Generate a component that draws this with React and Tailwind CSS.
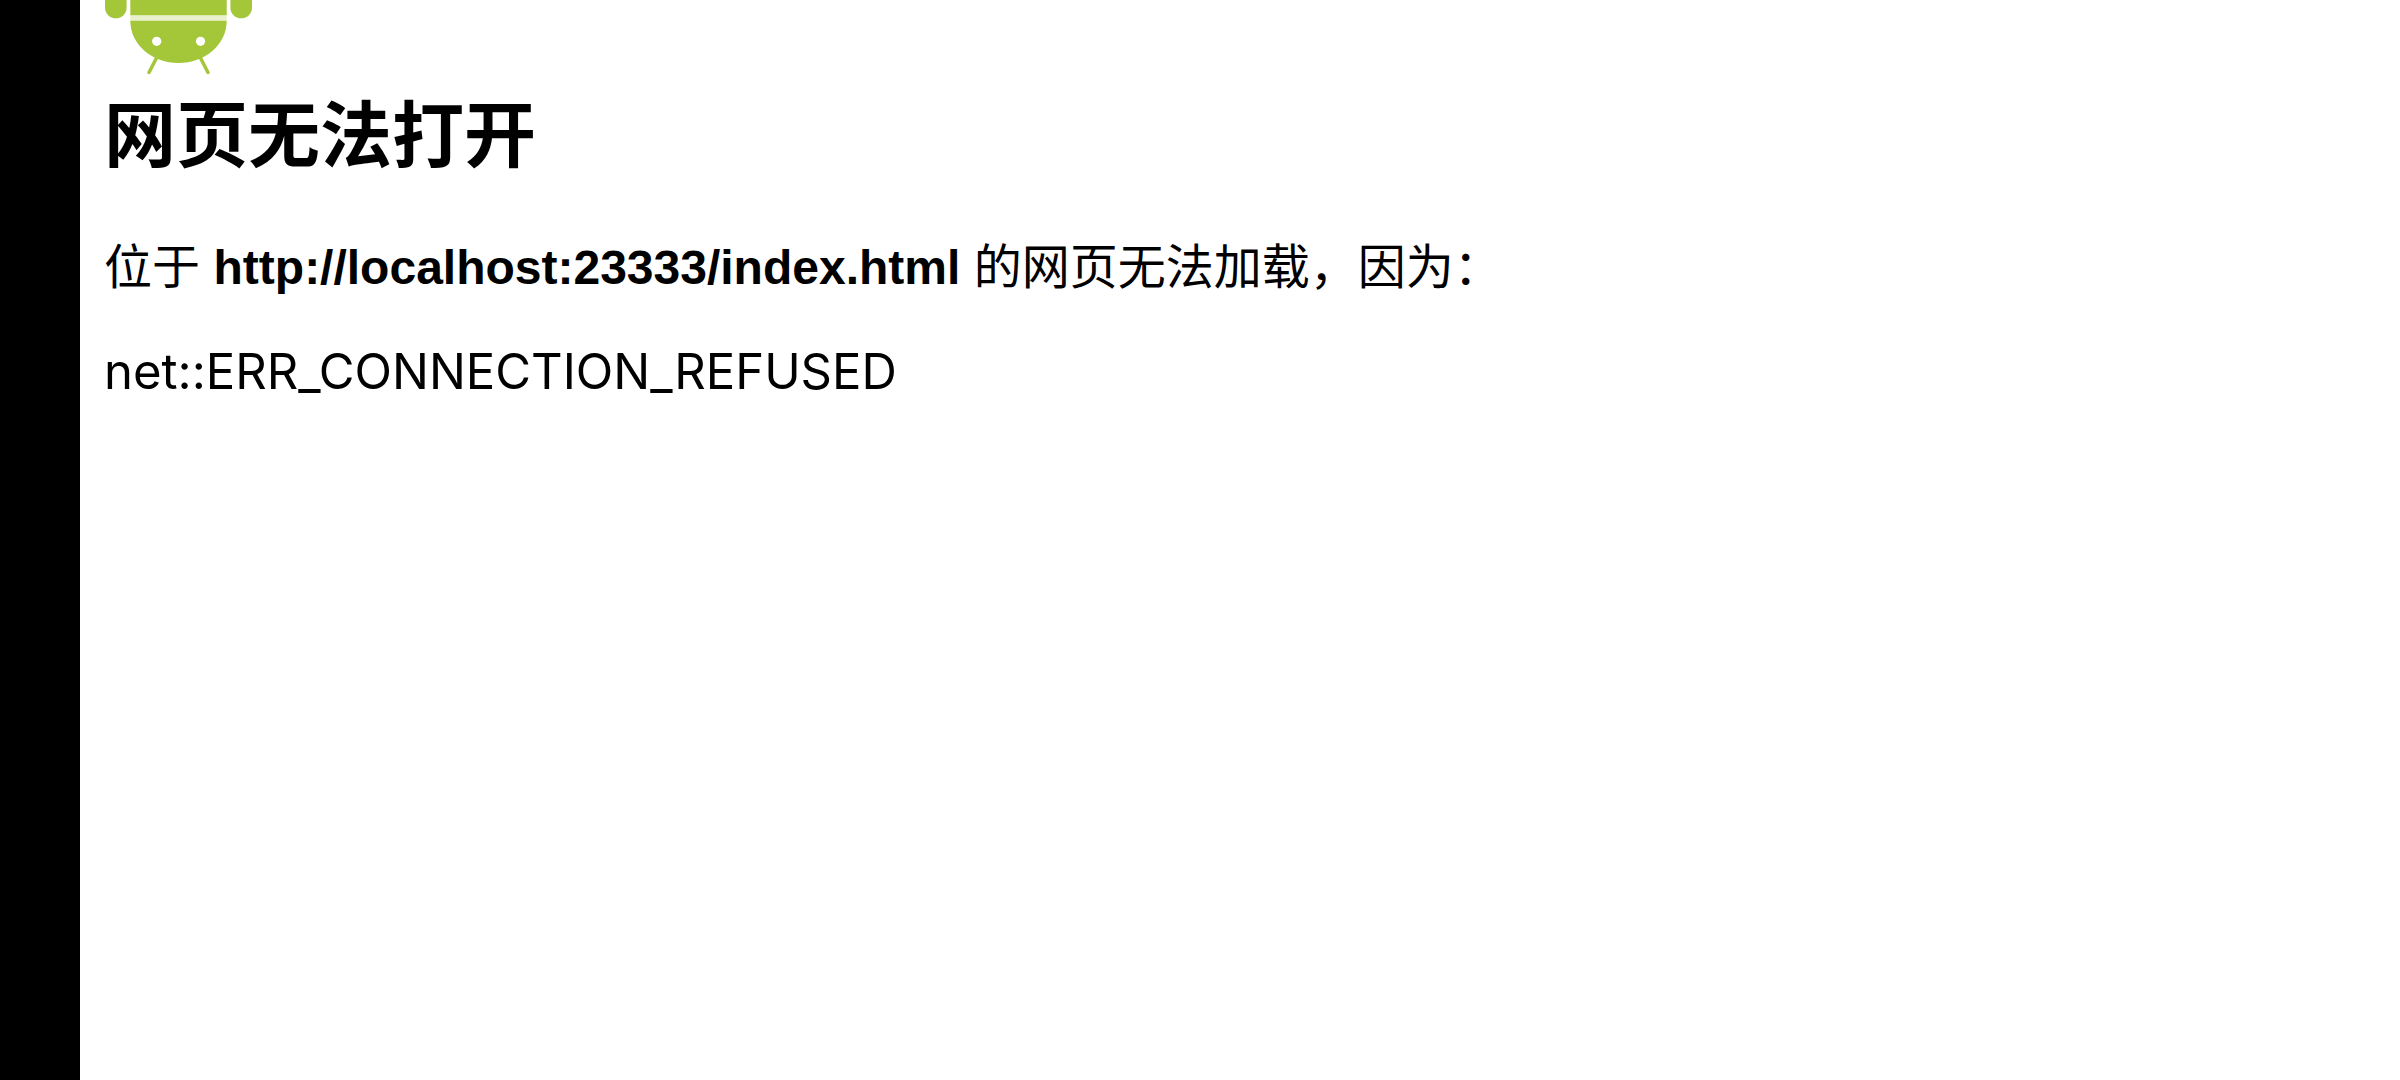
const App = () => {
  return (
    <div className="flex min-h-screen bg-white text-black font-['Inter','Noto_Sans_CJK_SC',sans-serif]">
      <div className="w-20 shrink-0 bg-black" />

      <main className="flex-1 px-6">
        <AndroidLogo />
        <h1 className="text-[72px] leading-[96px] font-bold mt-3">网页无法打开</h1>
        <p className="text-[48px] leading-[56px] mt-14">
          位于 <b className="font-['Liberation_Sans',sans-serif] font-bold">http://localhost:23333/index.html</b>{' '}
          的网页无法加载，因为：
        </p>
        <p className="text-[49px] leading-[56px] mt-12">net::ERR_CONNECTION_REFUSED</p>
      </main>
    </div>
  );
};

const AndroidLogo = () => (
  <svg viewBox="0 0 150 75" className="w-[150px] h-[75px]" fill="#a4c639" role="img" aria-label="Android">
    {/* arms */}
    <path d="M1 0H22.6V7.5A10.8 10.8 0 0 1 1 7.5Z" />
    <path d="M126.4 0H148V7.5A10.8 10.8 0 0 1 126.4 7.5Z" />
    {/* body */}
    <path d="M26.3 0H122.7V15.5H26.3Z" />
    <path d="M26.3 15.5H122.7V20.7H26.3Z" fill="#e8f1cc" />
    {/* head */}
    <path d="M26.3 20.7H122.7C122.7 45 100.5 63 74.5 63S26.3 45 26.3 20.7Z" />
    <circle cx="52.7" cy="41.3" r="4.6" fill="#fff" />
    <circle cx="96.5" cy="41.3" r="4.6" fill="#fff" />
    <path d="M53 57L45 72.5M96 57L104 72.5" stroke="#a4c639" strokeWidth="3.5" strokeLinecap="round" />
  </svg>
);

export default App;
